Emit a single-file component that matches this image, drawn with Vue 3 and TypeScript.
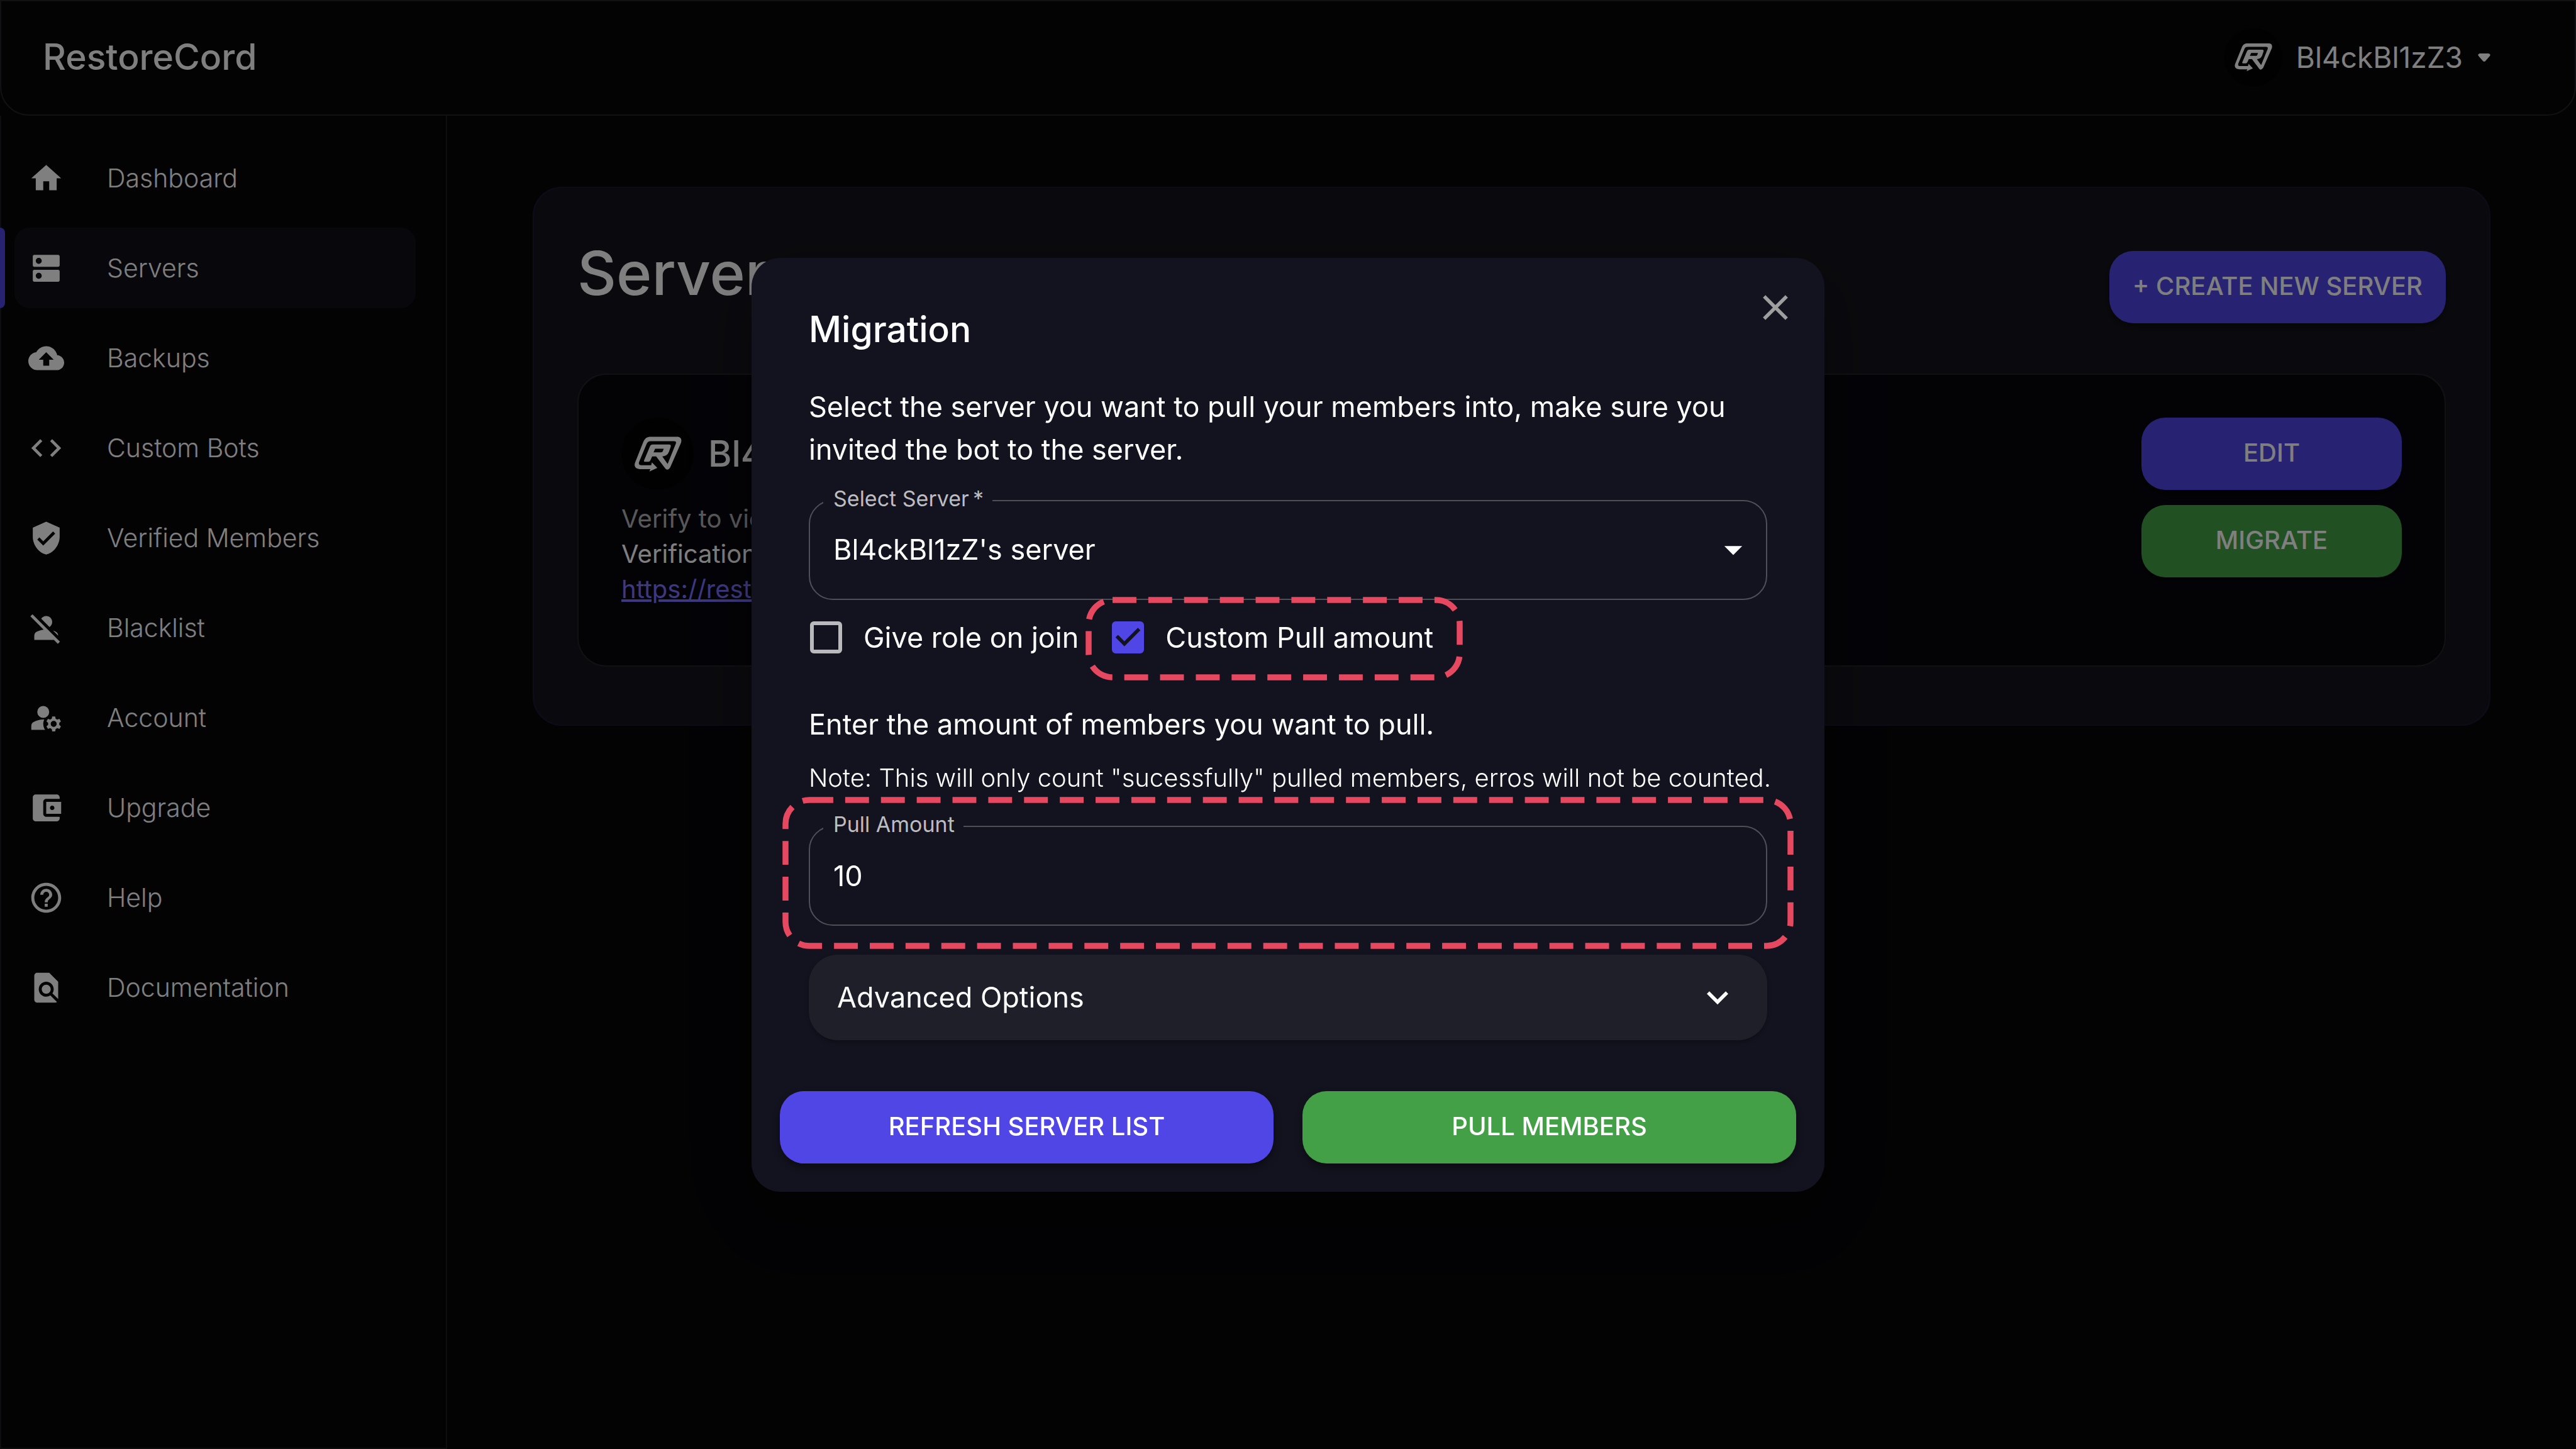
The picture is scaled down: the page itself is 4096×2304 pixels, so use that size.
<script setup lang="ts">
import { ref } from 'vue'

interface NavItem {
  label: string
  path: string
  active?: boolean
}

const navItems: NavItem[] = [
  { label: 'Dashboard', path: 'M10 20v-6h4v6h5v-8h3L12 3 2 12h3v8z' },
  {
    label: 'Servers',
    active: true,
    path: 'M20 13H4c-.55 0-1 .45-1 1v6c0 .55.45 1 1 1h16c.55 0 1-.45 1-1v-6c0-.55-.45-1-1-1M7 19c-1.1 0-2-.9-2-2s.9-2 2-2 2 .9 2 2-.9 2-2 2M20 3H4c-.55 0-1 .45-1 1v6c0 .55.45 1 1 1h16c.55 0 1-.45 1-1V4c0-.55-.45-1-1-1M7 9c-1.1 0-2-.9-2-2s.9-2 2-2 2 .9 2 2-.9 2-2 2',
  },
  {
    label: 'Backups',
    path: 'M19.35 10.04C18.67 6.59 15.64 4 12 4 9.11 4 6.6 5.64 5.35 8.04 2.34 8.36 0 10.91 0 14c0 3.31 2.69 6 6 6h13c2.76 0 5-2.24 5-5 0-2.64-2.05-4.78-4.65-4.96M14 13v4h-4v-4H7l5-5 5 5z',
  },
  {
    label: 'Custom Bots',
    path: 'M9.4 16.6 4.8 12l4.6-4.6L8 6l-6 6 6 6zm5.2 0 4.6-4.6-4.6-4.6L16 6l6 6-6 6z',
  },
  {
    label: 'Verified Members',
    path: 'M12 1 3 5v6c0 5.55 3.84 10.74 9 12 5.16-1.26 9-6.45 9-12V5zm-2 16-4-4 1.41-1.41L10 14.17l6.59-6.59L18 9z',
  },
  {
    label: 'Blacklist',
    path: 'M8.65 5.82C9.36 4.72 10.6 4 12 4c2.21 0 4 1.79 4 4 0 1.4-.72 2.64-1.82 3.35zM20 17.17c-.02-1.1-.63-2.11-1.61-2.62-.54-.28-1.13-.54-1.77-.76zm1.19 4.02L2.81 2.81 1.39 4.22l8.89 8.89c-1.81.23-3.39.79-4.67 1.45-1 .51-1.61 1.54-1.61 2.66V20h13.17l2.61 2.61z',
  },
  {
    label: 'Account',
    path: 'M6 8a4 4 0 1 0 8 0a4 4 0 1 0-8 0M10.67 13.02C10.45 13.01 10.23 13 10 13c-2.42 0-4.68.67-6.61 1.82-.88.52-1.39 1.5-1.39 2.53V20h9.26c-.79-1.13-1.26-2.51-1.26-4 0-1.07.25-2.07.67-2.98M20.75 16c0-.22-.03-.42-.06-.63l1.14-1.01-1-1.73-1.45.49c-.32-.27-.68-.48-1.08-.63L18 11h-2l-.3 1.49c-.4.15-.76.36-1.08.63l-1.45-.49-1 1.73 1.14 1.01c-.03.21-.06.41-.06.63s.03.42.06.63l-1.14 1.01 1 1.73 1.45-.49c.32.27.68.48 1.08.63L16 21h2l.3-1.49c.4-.15.76-.36 1.08-.63l1.45.49 1-1.73-1.14-1.01c.03-.21.06-.41.06-.63M17 18c-1.1 0-2-.9-2-2s.9-2 2-2 2 .9 2 2-.9 2-2 2',
  },
  {
    label: 'Upgrade',
    path: 'M21 18v1c0 1.1-.9 2-2 2H5c-1.11 0-2-.9-2-2V5c0-1.1.89-2 2-2h14c1.1 0 2 .9 2 2v1h-9c-1.11 0-2 .9-2 2v8c0 1.1.89 2 2 2zm-9-2h10V8H12zm4-2.5c-.83 0-1.5-.67-1.5-1.5s.67-1.5 1.5-1.5 1.5.67 1.5 1.5-.67 1.5-1.5 1.5',
  },
  {
    label: 'Help',
    path: 'M11 18h2v-2h-2zm1-16C6.48 2 2 6.48 2 12s4.48 10 10 10 10-4.48 10-10S17.52 2 12 2m0 18c-4.41 0-8-3.59-8-8s3.59-8 8-8 8 3.59 8 8-3.59 8-8 8m0-14c-2.21 0-4 1.79-4 4h2c0-1.1.9-2 2-2s2 .9 2 2c0 2-3 1.75-3 5h2c0-2.25 3-2.5 3-5 0-2.21-1.79-4-4-4',
  },
  {
    label: 'Documentation',
    path: 'M20 19.59V8l-6-6H6c-1.1 0-1.99.9-1.99 2L4 20c0 1.1.89 2 1.99 2H18c.45 0 .85-.15 1.19-.4l-4.43-4.43c-.8.52-1.74.83-2.76.83-2.76 0-5-2.24-5-5s2.24-5 5-5 5 2.24 5 5c0 1.02-.31 1.96-.83 2.75zM9 13c0 1.66 1.34 3 3 3s3-1.34 3-3-1.34-3-3-3-3 1.34-3 3',
  },
]

const logoPath =
  'M100 316C74 316 64 301 73 280L113 180C122 159 132 153 152 153H284C302 153 309 166 303 184L252 300C246 316 233 324 225 314L178 252H158L149 272Q146 279 139 279H122Q114 279 118 270L147 201Q151 192 161 192H243Q255 192 251 204L242 230Q234 250 209 252L236 290L277 188Q282 175 268 175H150Q136 175 131 187L92 280Q87 296 103 296H153L157 282L184 310L144 328L149 316ZM173 213L165 231H203Q210 231 212 225L216 213Z'

const server = ref("Bl4ckBl1zZ's server")
const giveRole = ref(false)
const customPull = ref(true)
const pullAmount = ref('10')
const advancedOpen = ref(false)
</script>

<template>
  <div class="app">
    <header class="topbar">
      <a class="brand" href="#">RestoreCord</a>
      <button class="user" type="button">
        <span class="avatar avatar-small">
          <svg viewBox="60 145 250 190" aria-hidden="true"><path fill-rule="evenodd" :d="logoPath" /></svg>
        </span>
        <span class="user-name">Bl4ckBl1zZ3</span>
        <svg class="user-caret" viewBox="0 0 20 13" aria-hidden="true">
          <path d="M3 0H17Q21 1 19 4L12 12Q10 14 8 12L1 4Q-1 1 3 0Z" />
        </svg>
      </button>
    </header>

    <div class="body">
      <aside class="sidebar">
        <nav>
          <ul class="nav-list">
            <li v-for="item in navItems" :key="item.label" class="nav-row" :class="{ active: item.active }">
              <a class="nav-link" href="#" :aria-current="item.active ? 'page' : undefined">
                <svg class="nav-icon" viewBox="0 0 24 24" aria-hidden="true">
                  <path fill-rule="evenodd" :d="item.path" />
                </svg>
                <span>{{ item.label }}</span>
              </a>
            </li>
          </ul>
        </nav>
      </aside>

      <main class="main">
        <section class="panel">
          <div class="panel-head">
            <h1>Servers</h1>
            <button class="btn btn-primary" type="button">+ CREATE NEW SERVER</button>
          </div>
          <article class="card">
            <div class="card-info">
              <div class="card-title">
                <span class="avatar">
                  <svg viewBox="60 145 250 190" aria-hidden="true"><path fill-rule="evenodd" :d="logoPath" /></svg>
                </span>
                <h2>Bl4ckBl1zZ</h2>
              </div>
              <p class="muted">Verify to view</p>
              <p>Verification URL:</p>
              <p><a class="link" href="#">https://restorecord.com</a></p>
            </div>
            <div class="card-actions">
              <button class="btn btn-primary" type="button">EDIT</button>
              <button class="btn btn-success" type="button">MIGRATE</button>
            </div>
          </article>
        </section>
      </main>
    </div>

    <div class="backdrop">
      <section class="dialog" role="dialog" aria-modal="true" aria-labelledby="dialog-title">
        <button class="close" type="button" aria-label="Close">
          <svg viewBox="0 0 24 24" aria-hidden="true">
            <path d="M19 6.41 17.59 5 12 10.59 6.41 5 5 6.41 10.59 12 5 17.59 6.41 19 12 13.41 17.59 19 19 17.59 13.41 12z" />
          </svg>
        </button>
        <div class="dialog-content">
          <h2 id="dialog-title" class="dialog-title">Migration</h2>
          <p class="lead">
            Select the server you want to pull your members into, make sure you invited the bot to the server.
          </p>

          <div class="field">
            <label for="server">Select Server&thinsp;*</label>
            <select id="server" v-model="server">
              <option>Bl4ckBl1zZ's server</option>
            </select>
            <svg class="select-caret" viewBox="0 0 24 24" aria-hidden="true"><path d="m7 10 5 5 5-5z" /></svg>
          </div>

          <div class="checks">
            <label class="check">
              <input v-model="giveRole" type="checkbox" />
              <span>Give role on join</span>
            </label>
            <div class="marked">
              <label class="check">
                <span class="check-box">
                  <input v-model="customPull" type="checkbox" />
                  <svg v-if="customPull" viewBox="3 3 18 18" aria-hidden="true">
                    <path d="m10 17-5-5 1.41-1.41L10 14.17l7.59-7.59L19 8z" />
                  </svg>
                </span>
                <span>Custom Pull amount</span>
              </label>
              <svg class="outline outline-check" viewBox="0 0 600 133" aria-hidden="true">
                <rect x="5" y="5" width="590" height="123" rx="38" />
              </svg>
            </div>
          </div>

          <p class="prompt">Enter the amount of members you want to pull.</p>
          <p class="note">Note: This will only count "sucessfully" pulled members, erros will not be counted.</p>

          <div class="field">
            <label for="amount">Pull Amount</label>
            <input id="amount" v-model="pullAmount" type="text" inputmode="numeric" />
            <svg class="outline outline-field" viewBox="0 0 1608 242" aria-hidden="true">
              <rect x="5" y="5" width="1598" height="232" rx="38" />
            </svg>
          </div>

          <button
            class="accordion"
            type="button"
            :aria-expanded="advancedOpen"
            @click="advancedOpen = !advancedOpen"
          >
            <span>Advanced Options</span>
            <svg viewBox="0 0 24 24" aria-hidden="true">
              <path d="M16.59 8.59 12 13.17 7.41 8.59 6 10l6 6 6-6z" />
            </svg>
          </button>
        </div>
        <div class="dialog-actions">
          <button class="btn btn-primary" type="button">REFRESH SERVER LIST</button>
          <button class="btn btn-success" type="button">PULL MEMBERS</button>
        </div>
      </section>
    </div>
  </div>
</template>

<style>
body {
  background: #060609;
}
</style>

<style scoped>
* {
  box-sizing: border-box;
}

h1,
h2,
p,
ul {
  margin: 0;
  padding: 0;
}

a {
  color: inherit;
  text-decoration: none;
}

button,
input,
select {
  font: inherit;
  color: inherit;
  margin: 0;
}

.app {
  display: flex;
  flex-direction: column;
  min-height: 100vh;
  color: #fff;
  background: #060609;
  font-family: Inter, "Liberation Sans", sans-serif;
  font-optical-sizing: none;
  font-size: 40px;
  line-height: 56px;
}

svg {
  display: block;
  fill: currentColor;
}

/* Top bar */
.topbar {
  display: flex;
  align-items: center;
  justify-content: space-between;
  height: 184px;
  padding: 0 134px 2px 66px;
  border: 2px solid #222226;
  border-radius: 0 0 46px 46px;
}

.brand {
  font-size: 57px;
  font-weight: 500;
  line-height: 68px;
}

.user {
  display: flex;
  align-items: center;
  padding: 0;
  border: 0;
  background: none;
  font-size: 46px;
}

.user-name {
  margin: 0 24px 0 22px;
}

.user-caret {
  width: 20px;
  height: 13px;
}

.avatar {
  display: flex;
  align-items: center;
  justify-content: center;
  width: 115px;
  height: 115px;
  border-radius: 50%;
  background: #020202;
}

.avatar svg {
  width: 79px;
  height: 60px;
}

.avatar-small {
  width: 92px;
  height: 92px;
}

.avatar-small svg {
  width: 63px;
  height: 48px;
}

/* Side navigation */
.body {
  display: flex;
  flex: 1;
}

.sidebar {
  flex: none;
  width: 711px;
  padding-top: 35px;
  border: solid #1c1c20;
  border-width: 0 2px 2px;
}

.nav-list {
  display: flex;
  flex-direction: column;
  gap: 15px;
  list-style: none;
}

.nav-row {
  padding: 0 48px 0 21px;
}

.nav-row.active {
  position: relative;
}

.nav-row.active::before {
  content: "";
  position: absolute;
  top: 0;
  bottom: 0;
  left: -2px;
  width: 8px;
  border-radius: 0 8px 8px 0;
  background: #4f46e5;
}

.nav-link {
  display: flex;
  align-items: center;
  gap: 68px;
  height: 128px;
  padding: 0 22px;
  border-radius: 24px;
  font-size: 41px;
  font-weight: 300;
}

.active .nav-link {
  background: #101019;
}

.nav-icon {
  width: 57px;
  height: 57px;
}

/* Server panel */
.main {
  flex: 1;
  padding: 113px 136px;
}

.panel {
  padding: 70px 69px 92px;
  border: 2px solid #1a1730;
  border-radius: 46px;
  background: #15151d;
}

.panel-head {
  display: flex;
  align-items: flex-end;
  justify-content: space-between;
  margin-bottom: 80px;
}

.panel-head h1 {
  margin-bottom: 15px;
  font-size: 96px;
  font-weight: 500;
  line-height: 130px;
}

.btn {
  height: 115px;
  padding: 0 37px 3px;
  border: 0;
  border-radius: 38px;
  color: #fff;
  font-size: 40px;
  font-weight: 500;
  box-shadow: 0 6px 12px rgba(0, 0, 0, 0.4);
}

.btn-primary {
  background: #4f46e5;
}

.btn-success {
  background: #43a047;
}

.card {
  display: flex;
  justify-content: space-between;
  padding: 68px 68px 93px;
  border: 2px solid #232327;
  border-radius: 46px;
  background: #07060d;
}

.card-title {
  display: flex;
  align-items: center;
  gap: 23px;
  margin-bottom: 18px;
}

.card-title h2 {
  font-size: 57px;
  font-weight: 500;
}

.muted {
  color: rgba(255, 255, 255, 0.7);
}

.link {
  color: #7a71ff;
  text-decoration: underline;
}

.card-actions {
  display: flex;
  flex-direction: column;
  gap: 24px;
  width: 414px;
}

/* Dialog */
.backdrop {
  position: fixed;
  inset: 0;
  display: flex;
  align-items: center;
  justify-content: center;
  background: rgba(0, 0, 0, 0.5);
}

.dialog {
  position: relative;
  width: 100%;
  max-width: 1706px;
  padding: 80px 0 45px;
  border-radius: 46px;
  background: #13131f;
  font-size: 45px;
  line-height: 68px;
  box-shadow: 0 26px 36px -17px rgba(0, 0, 0, 0.2), 0 57px 90px 7px rgba(0, 0, 0, 0.14),
    0 22px 110px 19px rgba(0, 0, 0, 0.12);
}

.close {
  position: absolute;
  top: 45px;
  right: 44px;
  padding: 0;
  border: 0;
  background: none;
  color: #9e9e9e;
}

.close svg {
  width: 68px;
  height: 68px;
}

.dialog-content {
  display: flex;
  flex-direction: column;
  padding: 0 91px;
}

.dialog-title {
  font-size: 57px;
  font-weight: 500;
}

.lead {
  margin: 55px 0 46px;
}

.field {
  position: relative;
}

.field label {
  position: absolute;
  top: -26px;
  left: 23px;
  padding: 0 14px 0 16px;
  background: #13131f;
  color: #bdbdc1;
  font-size: 34px;
  line-height: 48px;
}

.field select,
.field input {
  display: block;
  width: 100%;
  height: 159px;
  padding: 0 37px;
  border: 2px solid #4f4f58;
  border-radius: 38px;
  outline: 0;
  background: transparent;
  appearance: none;
}

.select-caret {
  position: absolute;
  top: 45px;
  right: 20px;
  width: 68px;
  height: 68px;
  pointer-events: none;
}

.checks {
  display: flex;
  gap: 53px;
  margin: 26px 0 70px;
  padding-left: 2px;
}

.check {
  display: flex;
  align-items: center;
  gap: 34px;
  white-space: nowrap;
}

.check input {
  display: block;
  width: 51px;
  height: 51px;
  border: 6px solid #bababc;
  border-radius: 6px;
  background: transparent;
  appearance: none;
}

.check input:checked {
  border-color: #4f46e5;
  background: #4f46e5;
}

.check-box {
  position: relative;
}

.check-box svg {
  position: absolute;
  inset: 0;
  fill: #13131f;
  pointer-events: none;
}

.marked {
  position: relative;
}

.outline {
  position: absolute;
  pointer-events: none;
}

.outline rect {
  fill: none;
  stroke: #e64860;
  stroke-width: 9.5;
  stroke-dasharray: 37.92 18.96;
}

.outline-check {
  top: -31px;
  left: -42px;
  width: 600px;
  height: 133px;
}

.outline-field {
  top: -46px;
  left: -42px;
  width: 1608px;
  height: 242px;
}

.note {
  margin: 21px 0 46px;
  font-size: 40px;
  font-weight: 300;
  line-height: 60px;
  white-space: nowrap;
}

.accordion {
  display: flex;
  align-items: center;
  justify-content: space-between;
  height: 136px;
  margin-top: 46px;
  padding: 0 45px;
  border: 0;
  border-radius: 46px;
  background: #1f1f29;
  box-shadow: 0 3px 6px rgba(0, 0, 0, 0.3);
}

.accordion svg {
  width: 68px;
  height: 68px;
}

.dialog-actions {
  display: grid;
  grid-template-columns: 1fr 1fr;
  gap: 46px;
  margin-top: 81px;
  padding: 0 45px;
}
</style>
